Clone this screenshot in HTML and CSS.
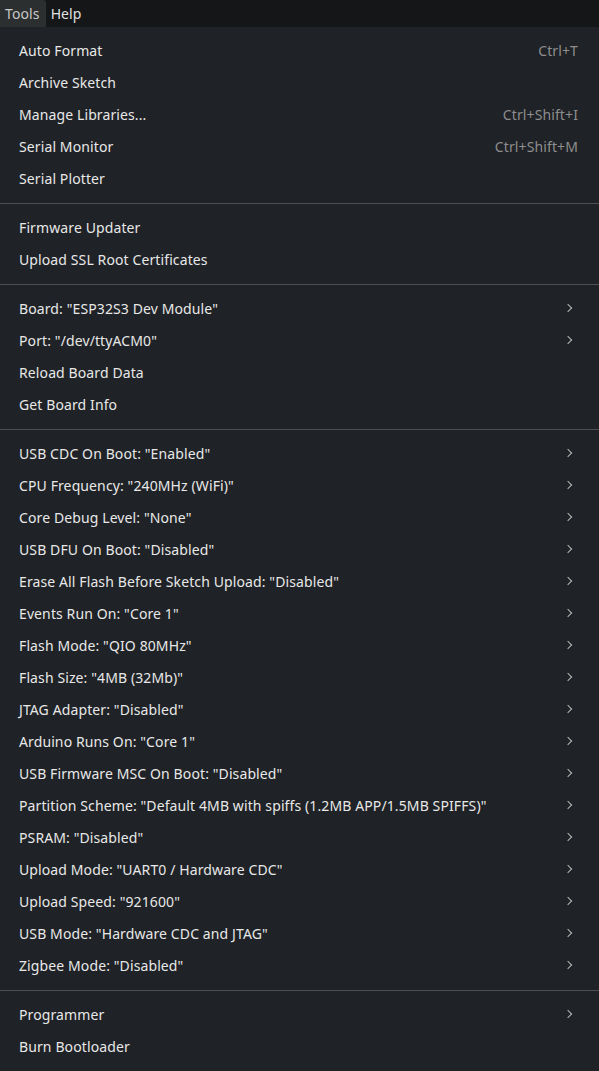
FILE: index.html
```html
<!DOCTYPE html>
<html>
<head>
<meta charset="utf-8">
<link rel="stylesheet" href="styles.css">
</head>
<body>
<div class="menubar">
  <div class="mb-item active">Tools</div>
  <div class="mb-item">Help</div>
</div>
<div class="menu">
  <div class="item"><span>Auto Format</span><span class="sc">Ctrl+T</span></div>
  <div class="item"><span>Archive Sketch</span></div>
  <div class="item"><span>Manage Libraries...</span><span class="sc">Ctrl+Shift+I</span></div>
  <div class="item"><span>Serial Monitor</span><span class="sc">Ctrl+Shift+M</span></div>
  <div class="item"><span>Serial Plotter</span></div>
  <div class="sep"></div>
  <div class="item"><span>Firmware Updater</span></div>
  <div class="item"><span>Upload SSL Root Certificates</span></div>
  <div class="sep"></div>
  <div class="item sub"><span>Board: "ESP32S3 Dev Module"</span></div>
  <div class="item sub"><span>Port: "/dev/ttyACM0"</span></div>
  <div class="item"><span>Reload Board Data</span></div>
  <div class="item"><span>Get Board Info</span></div>
  <div class="sep"></div>
  <div class="item sub"><span>USB CDC On Boot: "Enabled"</span></div>
  <div class="item sub"><span>CPU Frequency: "240MHz (WiFi)"</span></div>
  <div class="item sub"><span>Core Debug Level: "None"</span></div>
  <div class="item sub"><span>USB DFU On Boot: "Disabled"</span></div>
  <div class="item sub"><span>Erase All Flash Before Sketch Upload: "Disabled"</span></div>
  <div class="item sub"><span>Events Run On: "Core 1"</span></div>
  <div class="item sub"><span>Flash Mode: "QIO 80MHz"</span></div>
  <div class="item sub"><span>Flash Size: "4MB (32Mb)"</span></div>
  <div class="item sub"><span>JTAG Adapter: "Disabled"</span></div>
  <div class="item sub"><span>Arduino Runs On: "Core 1"</span></div>
  <div class="item sub"><span>USB Firmware MSC On Boot: "Disabled"</span></div>
  <div class="item sub"><span>Partition Scheme: "Default 4MB with spiffs (1.2MB APP/1.5MB SPIFFS)"</span></div>
  <div class="item sub"><span>PSRAM: "Disabled"</span></div>
  <div class="item sub"><span>Upload Mode: "UART0 / Hardware CDC"</span></div>
  <div class="item sub"><span>Upload Speed: "921600"</span></div>
  <div class="item sub"><span>USB Mode: "Hardware CDC and JTAG"</span></div>
  <div class="item sub"><span>Zigbee Mode: "Disabled"</span></div>
  <div class="sep"></div>
  <div class="item sub"><span>Programmer</span></div>
  <div class="item"><span>Burn Bootloader</span></div>
</div>
</body>
</html>
```

FILE: styles.css
```css
html, body {
  margin: 0;
  padding: 0;
  background: #1f2226;
  height: 100%;
}
body {
  font-family: "Noto Sans", "Open Sans", sans-serif;
  font-size: 14px;
  letter-spacing: 0.11px;
  color: #e8e8e8;
  width: 599px;
  height: 1071px;
  overflow: hidden;
}
.menubar {
  height: 27px;
  background: #151617;
  display: flex;
  align-items: stretch;
}
.mb-item {
  display: flex;
  align-items: center;
  padding: 0 6px 0 5px;
  color: #e0e0e0;
}
.mb-item.active {
  background: #2c2f30;
  border-top-right-radius: 3px;
  color: #c8c8c8;
  padding: 0 6px 0 5px;
}
.menu {
  padding-top: 7px;
  background: #1f2226;
}
.item {
  height: 32px;
  display: flex;
  align-items: center;
  justify-content: space-between;
  padding: 0 21px 0 19px;
  position: relative;
}
.sc {
  color: #8e8e8e;
}
.sub::after {
  content: "";
  position: absolute;
  right: 28px;
  top: 12.5px;
  width: 5px;
  height: 5px;
  border-right: 1.5px solid #b8b8b8;
  border-top: 1.5px solid #b8b8b8;
  transform: rotate(45deg);
}
.sep {
  height: 17px;
  box-sizing: border-box;
  padding-top: 9px;
}
.sep::before {
  content: "";
  display: block;
  width: 100%;
  height: 1px;
  background: #4d4f52;
}
```
